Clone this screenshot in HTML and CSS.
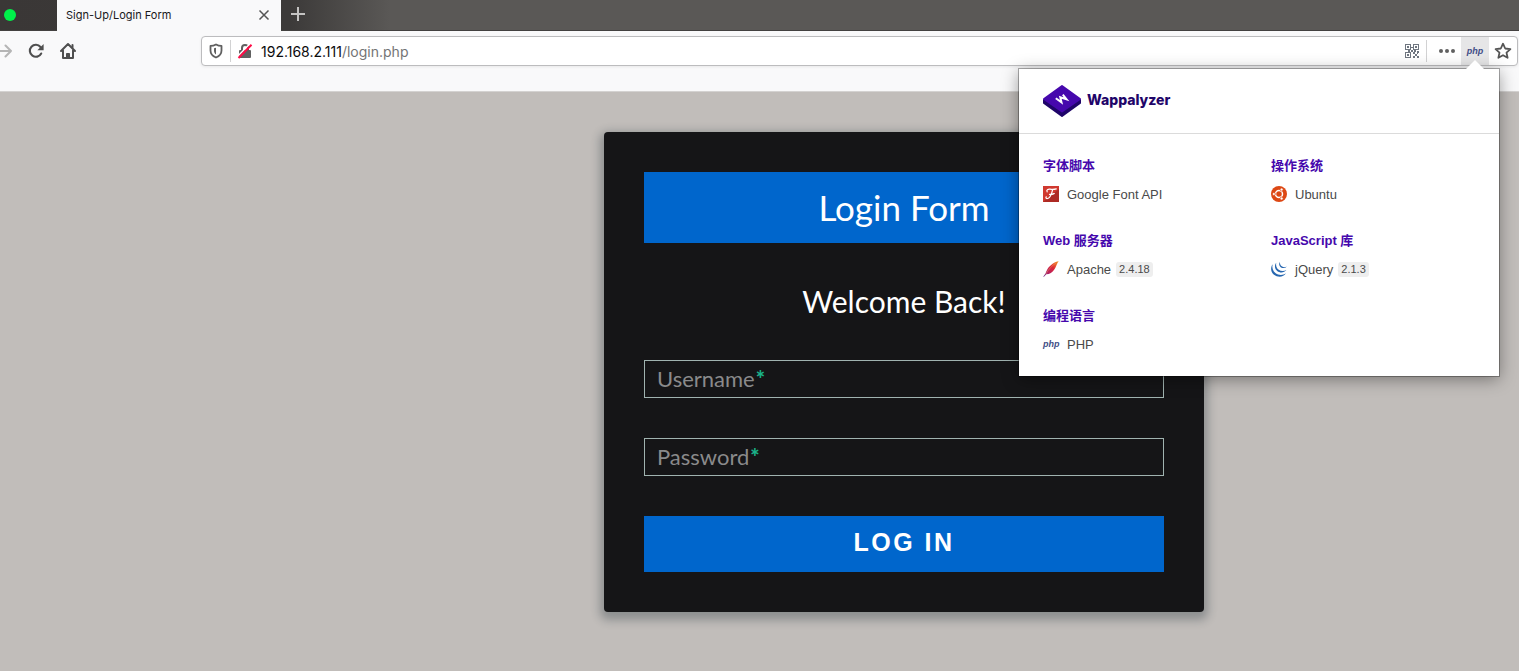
FILE: index.html
```html
<!DOCTYPE html>
<html lang="zh-CN">
<head>
<meta charset="utf-8">
<title>Sign-Up/Login Form</title>
<link rel="stylesheet" href="styles.css">
</head>
<body>
<header class="browser">
  <div class="tabbar">
    <div class="window-controls"><span class="dot"></span></div>
    <div class="tab">
      <span class="tab-title">Sign-Up/Login Form</span>
      <button class="icon-btn" aria-label="Close tab">
        <svg width="12" height="12" viewBox="0 0 12 12" fill="none" stroke="#555" stroke-width="1.500"><path d="M1.500 1.500l9 9M10.500 1.500l-9 9"/></svg>
      </button>
    </div>
    <button class="icon-btn new-tab" aria-label="New tab">
      <svg width="16" height="16" viewBox="0 0 16 16" fill="none" stroke="#c4c3c2" stroke-width="2"><path d="M8 1v14M1 8h14"/></svg>
    </button>
  </div>
  <div class="toolbar">
    <div class="nav">
      <button class="icon-btn" aria-label="Forward">
        <svg width="16" height="16" viewBox="0 0 16 16" fill="none" stroke="#b5b5b5" stroke-width="2" stroke-linecap="round" stroke-linejoin="round"><path d="M0 8h15M9.500 2.500L15 8l-5.500 5.500"/></svg>
      </button>
      <button class="icon-btn" aria-label="Reload">
        <svg width="16" height="16" viewBox="0 0 16 16"><path d="M13.200 10.500A6 6 0 1 1 12.500 4" fill="none" stroke="#4f4f4f" stroke-width="2.100" stroke-linecap="round"/><path d="M15.600 1v6.200H9.400z" fill="#4f4f4f"/></svg>
      </button>
      <button class="icon-btn" aria-label="Home">
        <svg width="16" height="16" viewBox="0 0 16 16" fill="none" stroke="#4f4f4f" stroke-width="2" stroke-linecap="round" stroke-linejoin="round"><path d="M1 8l7-7 7 7M3 7.500V15h10V7.500"/><path d="M12.500 2v2.500"/><path d="M6.500 15v-4.500h3V15" fill="#4f4f4f" stroke-width="1"/></svg>
      </button>
    </div>
    <div class="urlbar">
      <svg class="shield" width="14" height="16" viewBox="0 0 14 16"><path d="M7 1.500C5 2.600 3.200 2.900 1.500 2.900v4.600c0 3.300 2 5.600 5.500 7 3.500-1.400 5.500-3.700 5.500-7V2.900C10.800 2.900 9 2.600 7 1.500z" fill="none" stroke="#606060" stroke-width="1.800" stroke-linejoin="round"/><path d="M7 4.700v6.800C5.600 10.500 5 9.300 5 7.500V5.200C5.700 5.100 6.400 5 7 4.700z" fill="#606060"/></svg>
      <span class="divider"></span>
      <svg class="lock" width="14" height="16" viewBox="0 0 14 16"><rect x="1" y="7" width="12" height="8" rx="1" fill="#606060"/><path d="M4 7.500V5a3 3 0 0 1 6 0v2.500" fill="none" stroke="#606060" stroke-width="2"/><path d="M-.7 13.700L12.500.3" stroke="#fff" stroke-width="1.600"/><path d="M.5 15L13.500 1.700" stroke="#ff0b46" stroke-width="2"/></svg>
      <span class="url"><b>192.168.2.111</b>/login.php</span>
      <button class="icon-btn" aria-label="QR code">
        <svg width="14" height="14" viewBox="0 0 14 14" fill="#6f7680"><path fill-rule="evenodd" d="M0 0h6v6H0zM1 1v4h4V1zM8 0h6v6H8zM9 1v4h4V1zM0 8h6v6H0zM1 9v4h4V9z"/><path d="M2 2h2v2H2zM10 2h2v2h-2zM2 10h2v2H2zM6 3h2v1H6zM3 6h2v2H3zM6 6h2v2H6zM9 6h2v2H9zM8 8h2v2H8zM12 7h2v2h-2zM10 10h2v2h-2zM8 12h2v2H8zM12 12h2v2h-2zM12 9h1v1h-1z"/></svg>
      </button>
      <span class="divider"></span>
      <button class="icon-btn" aria-label="Page actions">
        <svg width="16" height="4" viewBox="0 0 16 4" fill="#606060"><circle cx="2" cy="2" r="2"/><circle cx="8" cy="2" r="2"/><circle cx="14" cy="2" r="2"/></svg>
      </button>
      <button class="icon-btn php-btn" aria-label="Wappalyzer">php</button>
      <button class="icon-btn" aria-label="Bookmark">
        <svg width="18" height="18" viewBox="0 0 18 18" fill="none" stroke="#555" stroke-width="1.800" stroke-linejoin="round"><path d="M9 1.700l2.200 4.800 5.200.6-3.900 3.500 1.100 5.200L9 13.200l-4.600 2.600 1.100-5.200L1.600 7.100l5.200-.6z"/></svg>
      </button>
    </div>
  </div>
</header>

<main class="page">
  <section class="card">
    <h1 class="banner">Login Form</h1>
    <h2 class="welcome">Welcome Back!</h2>
    <form class="form">
      <div class="field">
        <input id="username" type="text" required>
        <label for="username">Username<span class="req">*</span></label>
      </div>
      <div class="field">
        <input id="password" type="password" required>
        <label for="password">Password<span class="req">*</span></label>
      </div>
      <button class="submit" type="button">LOG IN</button>
    </form>
  </section>
</main>

<aside class="popup">
  <div class="popup-head">
    <svg width="38" height="32" viewBox="0 0 38 32" stroke-width="2" stroke-linejoin="round"><path d="M1 15v3l18 13 18-13v-3z" fill="#1f0569" stroke="#1f0569"/><path d="M19 1L1 14l18 12.500L37 14z" fill="#4608ad" stroke="#4608ad"/><path d="M12.800 13.200l5.700 4.100-1.200-5.100 6.200 2-3.700-4.600" fill="none" stroke="#fff" stroke-linejoin="miter"/></svg>
    <span class="brand">Wappalyzer</span>
  </div>
  <div class="popup-body">
    <div class="col">
      <section class="group">
        <h3>字体脚本</h3>
        <a class="tech" href="#">
          <svg width="16" height="16" viewBox="0 0 16 16"><path d="M0 0h16v16H0z" fill="#d0392f"/><path d="M0 16L16 3v13z" fill="#ad2a24"/><path d="M4.200 5.800C3 4.200 5 3 7 3.200c2 .3 4 .4 6.300-.3M9.800 3.300C8.500 7 8 12 4.500 12.500c-1.500.2-2-1-1.200-1.700M6.500 8.300c2 .4 3.300-.2 4.800-.8" fill="none" stroke="#fff" stroke-width="1.200" stroke-linecap="round"/></svg>
          <span>Google Font API</span>
        </a>
      </section>
      <section class="group">
        <h3>Web 服务器</h3>
        <a class="tech" href="#">
          <svg width="16" height="16" viewBox="0 0 16 16"><defs><linearGradient id="feather" x1="1" y1="0" x2="0" y2="1"><stop offset="0" stop-color="#f59b21"/><stop offset=".4" stop-color="#dc2638"/><stop offset=".7" stop-color="#b52163"/><stop offset="1" stop-color="#6b3590"/></linearGradient></defs><path d="M15.700.3C12 .8 7 4 4.500 8c-1 1.700-1.600 3.200-2 4.500L.2 15.700l.8.100 2.300-2.600c3.500 0 6-1.700 8-4.700C13.500 5.500 14 2 15.700.3z" fill="url(#feather)"/><path d="M3 12.800C5.500 8.500 9 4.500 13 2" fill="none" stroke="#f2a15b" stroke-width=".5"/></svg>
          <span>Apache</span><span class="ver">2.4.18</span>
        </a>
      </section>
      <section class="group">
        <h3>编程语言</h3>
        <a class="tech" href="#"><span class="php-mark">php</span><span>PHP</span></a>
      </section>
    </div>
    <div class="col">
      <section class="group">
        <h3>操作系统</h3>
        <a class="tech" href="#">
          <svg width="16" height="16" viewBox="0 0 16 16"><circle cx="8" cy="8" r="8" fill="#dd4814"/><circle cx="8" cy="8" r="3.500" fill="none" stroke="#fff" stroke-width="1.500"/><g fill="#fff" stroke="#dd4814" stroke-width=".7"><circle cx="2.900" cy="8" r="1.500"/><circle cx="10.600" cy="3.500" r="1.500"/><circle cx="10.600" cy="12.500" r="1.500"/></g></svg>
          <span>Ubuntu</span>
        </a>
      </section>
      <section class="group">
        <h3>JavaScript 库</h3>
        <a class="tech" href="#">
          <svg width="16" height="16" viewBox="0 0 16 16" fill="#2767b0"><path d="M1.600 3.200C-.8 6.700-.2 11 3 13.700c3.700 3 9.500 2.600 12-1.400-3 2.300-7.300 2.300-10.300 0C1.800 10.200.8 6.500 1.600 3.200z"/><path d="M5.200 1.700C3.300 4.300 3.600 7.800 6.200 9.900c2.800 2.200 7 2 9.200-1-2.300 1.500-5.500 1.400-7.700-.2C5.500 7.200 4.700 4.300 5.200 1.700z"/><path d="M9 .7C7.700 2.500 8 4.800 9.700 6.200c1.900 1.400 4.500 1.200 6-.6-1.600.8-3.500.7-4.900-.3C9.300 4.300 8.700 2.500 9 .7z"/></svg>
          <span>jQuery</span><span class="ver">2.1.3</span>
        </a>
      </section>
    </div>
  </div>
</aside>
</body>
</html>
```
FILE: styles.css
```css
* { box-sizing: border-box; }
body {
  margin: 0;
  min-height: 100vh;
  display: flex;
  flex-direction: column;
  position: relative;
  background: #c1bdba;
  font-family: "Liberation Sans", "Noto Sans CJK SC", sans-serif;
}
h1, h2, h3 { margin: 0; }
svg { display: block; flex: none; overflow: visible; }
.icon-btn {
  display: flex;
  align-items: center;
  justify-content: center;
  padding: 0;
  border: 0;
  background: none;
}

.browser {
  background: #f9f9fa;
  border-bottom: 1px solid #d4d2d1;
  font-family: Inter, sans-serif;
}
.tabbar {
  display: flex;
  height: 31px;
  background: linear-gradient(90deg, #3a3736 0, #3c3a39 290px, #5a5856 390px, #5a5856 100%);
  box-shadow: inset 0 -1px 0 #434140;
}
.window-controls { width: 57px; padding: 9px 4px; }
.dot {
  display: block;
  width: 12px;
  height: 12px;
  border-radius: 50%;
  background: #00f04a;
}
.tab {
  width: 224px;
  padding: 0 11px 2px 9px;
  display: flex;
  align-items: center;
  justify-content: space-between;
  background: #f9f9fa;
  color: #18181a;
  font-size: 11px;
}
.new-tab { width: 34px; height: 28px; }
.toolbar {
  display: flex;
  align-items: center;
  height: 60px;
  padding: 0 1px 20px 0;
}
.nav { display: flex; gap: 16px; width: 201px; margin-left: -4px; flex: none; }
.urlbar {
  flex: 1;
  display: flex;
  align-items: center;
  height: 30px;
  margin-left: 4px;
  padding: 0 5px 0 7px;
  border: 1px solid #bcbcbe;
  border-radius: 4px;
  background: #fff;
  box-shadow: 0 1px 3px rgba(0, 0, 0, 0.07);
}
.divider { width: 1px; height: 22px; margin: 0 7px; background: #d2d2d3; }
.url { flex: 1; margin-left: 9px; font-size: 14px; color: #747475; }
.url b { font-weight: 400; color: #0c0c0d; }
.urlbar .icon-btn + .divider { margin-right: 12px; }
.php-btn {
  width: 28px;
  height: 28px;
  margin: 0 5px 0 6px;
  background: #e6e6e7;
}
.php-btn, .php-mark {
  color: #414d86;
  font: italic 700 9px "Liberation Sans", sans-serif;
}

.page {
  padding: 40px 0 59px 289px;
}
.card {
  max-width: 600px;
  margin: 0 auto;
  padding: 40px;
  border-radius: 4px;
  background: #151517;
  box-shadow: 0 4px 10px 4px rgba(19, 35, 47, 0.3);
  color: #fff;
  font-family: Lato, sans-serif;
}
.banner {
  padding: 14px 0 15px;
  background: #0066cc;
  font-size: 35px;
  line-height: 42px;
  font-weight: 400;
  text-align: center;
}
.welcome {
  margin: 40px 0;
  font-size: 30px;
  line-height: 37px;
  font-weight: 400;
  text-align: center;
}
.form { display: flex; flex-direction: column; gap: 40px; }
.field { position: relative; }
.field input {
  display: block;
  width: 100%;
  height: 38px;
  padding: 4px 12px;
  border: 1px solid #a0b3b0;
  border-radius: 0;
  background: none;
  color: #fff;
  font: 22px Lato, sans-serif;
}
.field label {
  position: absolute;
  left: 13px;
  top: 5px;
  font-size: 22px;
  line-height: 28px;
  color: #8a8a8b;
}
.req { margin-left: 1px; color: #1ab188; font-weight: 900; }
.submit {
  height: 56px;
  padding: 0 0 4px;
  border: 0;
  background: #0066cc;
  color: #fff;
  font: 700 25px "Liberation Sans", sans-serif;
  letter-spacing: 0.1em;
}

.popup {
  position: absolute;
  top: 69px;
  right: 20px;
  width: 480px;
  background: #fff;
  box-shadow: 0 0 0 1px rgba(0, 0, 0, 0.3), 0 3px 16px rgba(0, 0, 0, 0.4);
}
.popup::before {
  content: "";
  position: absolute;
  top: -9px;
  right: 15px;
  border: solid transparent;
  border-width: 0 9px 9px;
  border-bottom-color: #fff;
}
.popup-head {
  display: flex;
  align-items: center;
  gap: 6px;
  height: 65px;
  padding: 0 24px;
  border-bottom: 1px solid #dbdbdb;
}
.brand { padding-bottom: 3px; color: #1f0569; font: 800 14px Inter, sans-serif; }
.popup-body {
  display: grid;
  grid-template-columns: 1fr 1fr;
  gap: 24px;
  padding: 22px 24px;
}
.col { display: flex; flex-direction: column; gap: 27px; }
.group h3 { color: #4608ad; font-size: 13px; line-height: 20px; }
.tech {
  display: flex;
  align-items: center;
  gap: 8px;
  height: 20px;
  margin-top: 8px;
  color: #4a4a4a;
  font-size: 13px;
  text-decoration: none;
}
.php-mark { width: 16px; }
.ver {
  margin-left: -3px;
  padding: 0 3px;
  border-radius: 3px;
  background: #eee;
  font-size: 11px;
  line-height: 15px;
}
```
